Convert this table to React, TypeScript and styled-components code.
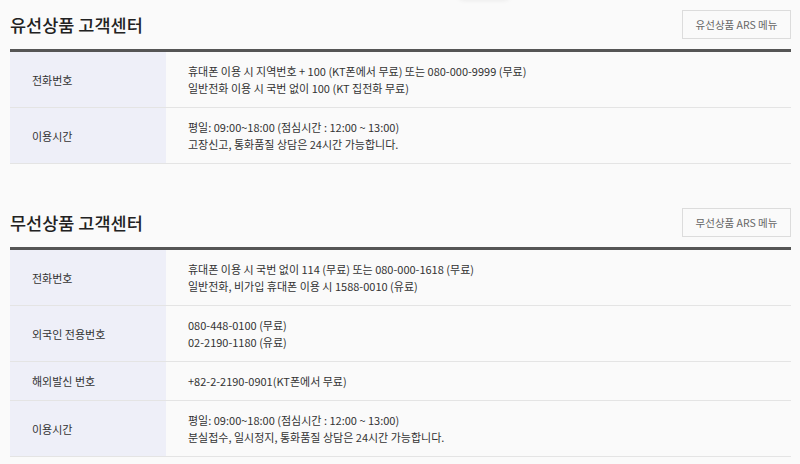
import styled, { createGlobalStyle } from 'styled-components';

// ── Data ──────────────────────────────────────────────────────────────────────

type Row = { label: string; lines: string[] };

const SECTIONS: { title: string; ars: string; rows: Row[] }[] = [
  {
    title: '유선상품 고객센터',
    ars: '유선상품 ARS 메뉴',
    rows: [
      {
        label: '전화번호',
        lines: [
          '휴대폰 이용 시 지역번호 + 100 (KT폰에서 무료) 또는 080-000-9999 (무료)',
          '일반전화 이용 시 국번 없이 100 (KT 집전화 무료)'
        ]
      },
      {
        label: '이용시간',
        lines: ['평일: 09:00~18:00 (점심시간 : 12:00 ~ 13:00)', '고장신고, 통화품질 상담은 24시간 가능합니다.']
      }
    ]
  },
  {
    title: '무선상품 고객센터',
    ars: '무선상품 ARS 메뉴',
    rows: [
      {
        label: '전화번호',
        lines: [
          '휴대폰 이용 시 국번 없이 114 (무료) 또는 080-000-1618 (무료)',
          '일반전화, 비가입 휴대폰 이용 시 1588-0010 (유료)'
        ]
      },
      { label: '외국인 전용번호', lines: ['080-448-0100 (무료)', '02-2190-1180 (유료)'] },
      { label: '해외발신 번호', lines: ['+82-2-2190-0901(KT폰에서 무료)'] },
      {
        label: '이용시간',
        lines: ['평일: 09:00~18:00 (점심시간 : 12:00 ~ 13:00)', '분실접수, 일시정지, 통화품질 상담은 24시간 가능합니다.']
      }
    ]
  }
];

// ── Component ─────────────────────────────────────────────────────────────────

export default function App() {
  return (
    <>
      <GlobalStyle />
      <Page>
        <TopShadow />
        {SECTIONS.map((section) => (
          <Section key={section.title}>
            <Header>
              <Title>{section.title}</Title>
              <ArsButton type="button">{section.ars}</ArsButton>
            </Header>
            <Table>
              {section.rows.map((row) => (
                <TableRow key={row.label}>
                  <Label>{row.label}</Label>
                  <Cell>
                    {row.lines.map((line) => (
                      <Line key={line}>{line}</Line>
                    ))}
                  </Cell>
                </TableRow>
              ))}
            </Table>
          </Section>
        ))}
      </Page>
    </>
  );
}

// ── Styled components ─────────────────────────────────────────────────────────

const GlobalStyle = createGlobalStyle`
  html, body {
    margin: 0;
    padding: 0;
    background: #fafafa;
  }
  body {
    font-family: 'Noto Sans CJK KR', 'Noto Sans', sans-serif;
    color: #333;
  }
`;

const Page = styled.main`
  position: relative;
  width: 800px;
  height: 464px;
  overflow: hidden;
  box-sizing: border-box;
  padding: 10px 9px 0 10px;
  display: flex;
  flex-direction: column;
  gap: 44px;
`;

/* faint shadow of a dropdown sitting above the viewport */
const TopShadow = styled.div`
  position: absolute;
  left: 455px;
  top: -20px;
  width: 58px;
  height: 20px;
  border-radius: 10px;
  box-shadow: 0 1px 4px rgba(0, 0, 0, 0.06);
`;

const Section = styled.section`
  display: flex;
  flex-direction: column;
`;

const Header = styled.div`
  display: flex;
  justify-content: space-between;
  align-items: center;
  padding-bottom: 10px;
`;

const Title = styled.h2`
  margin: 0;
  font-size: 17.5px;
  font-weight: 500;
  color: #222;
`;

const ArsButton = styled.button`
  width: 109px;
  height: 29px;
  box-sizing: border-box;
  border: 1px solid #dcdcdc;
  background: #fafafa;
  font-family: inherit;
  font-size: 10.5px;
  color: #666;
  padding: 0;
  cursor: pointer;
`;

const Table = styled.div`
  border-top: 3px solid #555;
`;

const TableRow = styled.div`
  display: grid;
  grid-template-columns: 156px 1fr;
  border-bottom: 1px solid #e4e4e4;
`;

const Label = styled.div`
  display: flex;
  align-items: center;
  padding: 0 22px;
  background: #eeeff8;
  font-size: 11px;
  color: #333;
`;

const Cell = styled.div`
  padding: 10.5px 22px;
  font-size: 11px;
  line-height: 17px;
  color: #333;
`;

const Line = styled.div``;
